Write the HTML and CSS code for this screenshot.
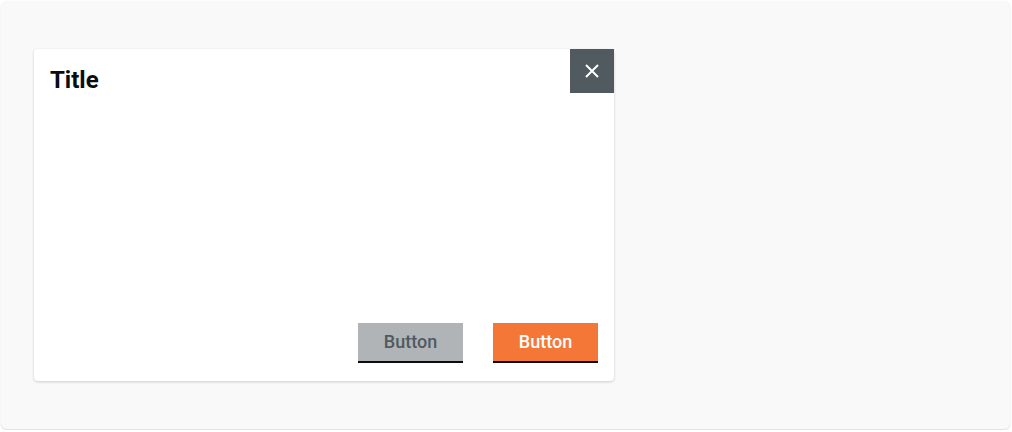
FILE: index.html
```html
<!DOCTYPE html>
<html>
<head>
<meta charset="utf-8">
<link rel="stylesheet" href="styles.css">
</head>
<body>
<div class="frame">
  <div class="card">
    <div class="card-head">
      <h2 class="title">Title</h2>
      <button class="close" aria-label="Close">
        <svg width="16" height="16" viewBox="0 0 16 16"><path d="M2 2 L14 14 M14 2 L2 14" stroke="#fff" stroke-width="2" fill="none"/></svg>
      </button>
    </div>
    <div class="card-body"></div>
    <div class="card-foot">
      <button class="btn btn-secondary">Button</button>
      <button class="btn btn-primary">Button</button>
    </div>
  </div>
</div>
</body>
</html>
```
FILE: styles.css
```css
html, body { margin: 0; padding: 0; background: #fff; }
body { font-family: Roboto, "Noto Sans", sans-serif; }
.frame {
  margin: 1px;
  width: 1009px;
  height: 428px;
  box-sizing: border-box;
  padding: 48px 33px;
  background: #f9f9f9;
  border-radius: 6px;
  box-shadow: 0 1px 2px rgba(0,0,0,0.15);
}
.card {
  width: 580px;
  height: 332px;
  background: #fff;
  border-radius: 4px;
  box-shadow: 0 1px 3px rgba(0,0,0,0.18);
  display: flex;
  flex-direction: column;
}
.card-head { display: flex; justify-content: space-between; align-items: flex-start; }
.title {
  margin: 0;
  padding: 16px 0 0 16px;
  font-size: 24px;
  font-weight: 700;
  line-height: 30px;
  color: #0b0c0c;
}
.close {
  width: 44px; height: 44px;
  border: 0; padding: 0;
  background: #505a5f;
  display: flex; align-items: center; justify-content: center;
}
.card-body { flex: 1; }
.card-foot {
  display: flex;
  justify-content: flex-end;
  gap: 30px;
  padding: 0 16px 18px;
}
.btn {
  width: 105px;
  height: 40px;
  border: 0;
  border-bottom: 2px solid #0b0c0c;
  padding: 0;
  font-family: Roboto, sans-serif;
  font-size: 18px;
  font-weight: 500;
  line-height: 38px;
}
.btn-secondary { background: #b1b4b6; color: #505a5f; }
.btn-primary { background: #f47738; color: #fff; }
```
